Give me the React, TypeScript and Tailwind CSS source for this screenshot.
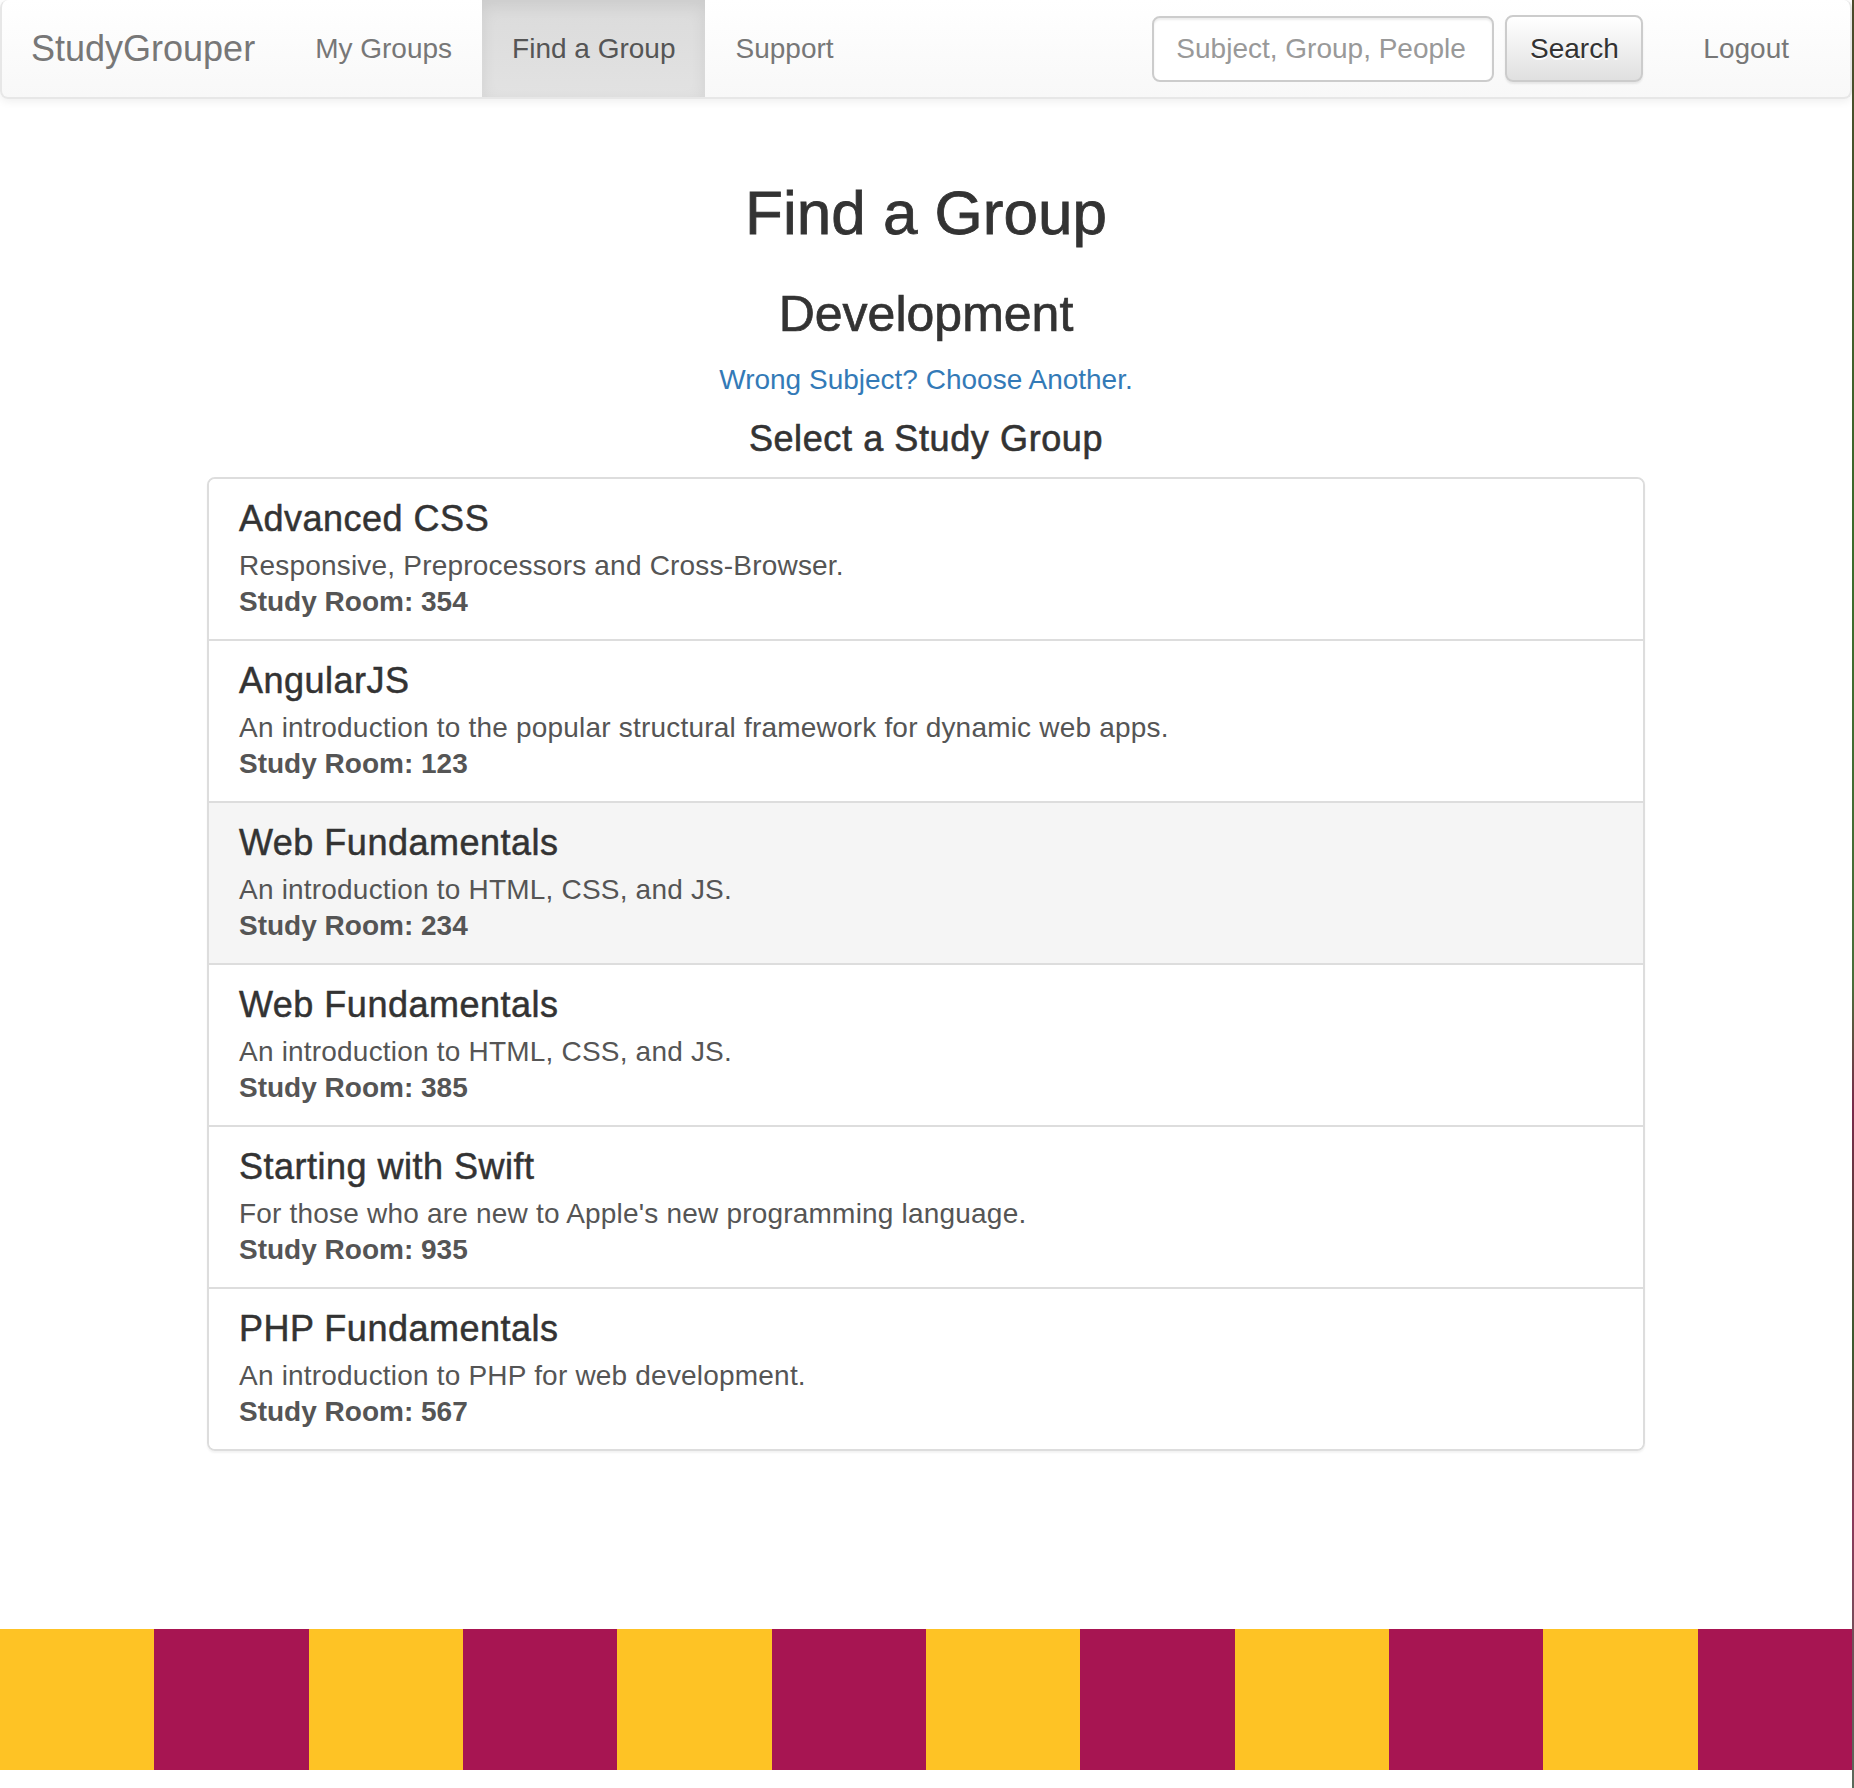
const groups = [
  {
    title: "Advanced CSS",
    desc: "Responsive, Preprocessors and Cross-Browser.",
    room: "354",
  },
  {
    title: "AngularJS",
    desc: "An introduction to the popular structural framework for dynamic web apps.",
    room: "123",
  },
  {
    title: "Web Fundamentals",
    desc: "An introduction to HTML, CSS, and JS.",
    room: "234",
    active: true,
  },
  {
    title: "Web Fundamentals",
    desc: "An introduction to HTML, CSS, and JS.",
    room: "385",
  },
  {
    title: "Starting with Swift",
    desc: "For those who are new to Apple's new programming language.",
    room: "935",
  },
  {
    title: "PHP Fundamentals",
    desc: "An introduction to PHP for web development.",
    room: "567",
  },
];

const stripes = [0, 1, 2, 3, 4, 5, 6, 7, 8, 9, 10, 11];

const Navbar = () => {
  return (
    <nav className="flex h-[99px] items-stretch rounded-[8px] border-2 border-t-0 border-[#e7e7e7] bg-[linear-gradient(to_bottom,#ffffff,#f8f8f8)] shadow-[0_2px_10px_rgba(0,0,0,0.075)]">
      <a className="flex items-center pl-[29px] pr-[30px] text-[36px] text-[#777]">
        StudyGrouper
      </a>
      <a className="flex items-center px-[30px] text-[28px] text-[#777]">
        My Groups
      </a>
      <a className="flex items-center bg-[linear-gradient(to_bottom,#dbdbdb,#e2e2e2)] px-[30px] text-[28px] text-[#555] shadow-[inset_0_6px_16px_rgba(0,0,0,0.075)]">
        Find a Group
      </a>
      <a className="flex items-center px-[30px] text-[28px] text-[#777]">
        Support
      </a>

      <div className="ml-auto flex items-center">
        <input
          className="h-[66px] w-[342px] rounded-[8px] border-2 border-[#ccc] bg-white px-[22px] text-[28px] text-[#555] shadow-[inset_0_2px_2px_rgba(0,0,0,0.075)] outline-none placeholder:text-[#999]"
          placeholder="Subject, Group, People"
        />
        <button className="ml-[11px] h-[67px] w-[138px] rounded-[8px] border-2 border-[#ccc] bg-[linear-gradient(to_bottom,#ffffff,#e0e0e0)] text-[28px] text-[#333] shadow-[0_2px_2px_rgba(0,0,0,0.075)] [text-shadow:0_2px_0_#fff]">
          Search
        </button>
        <a className="ml-[30px] mr-[31px] px-[30px] text-[28px] text-[#777]">
          Logout
        </a>
      </div>
    </nav>
  );
};

const GroupItem = ({ g }: { g: any }) => {
  return (
    <a
      className={
        "block border-b-2 border-[#ddd] px-[30px] pt-[20px] pb-[19px] last:border-b-0 " +
        (g.active ? "bg-[#f5f5f5]" : "bg-white")
      }
    >
      <h4 className="mb-[9px] text-[36px] leading-[40px] tracking-[0.5px] text-[#333] [-webkit-text-stroke:0.5px_#333]">
        {g.title}
      </h4>
      <p className="text-[28px] leading-[36px] tracking-[0.2px] text-[#555]">
        {g.desc}
      </p>
      <p className="text-[28px] font-bold leading-[36px] text-[#555]">
        Study Room: {g.room}
      </p>
    </a>
  );
};

export default function App() {
  return (
    <div className="flex w-full bg-white font-['Liberation_Sans',Arial,sans-serif]">
      <div className="flex min-w-0 flex-1 flex-col">
        <Navbar />

        <main className="flex flex-col items-center">
          <h1 className="mt-[80px] text-[62px] leading-[68px] text-[#333] [-webkit-text-stroke:0.8px_#333]">
            Find a Group
          </h1>
          <h2 className="mt-[40px] text-[50px] leading-[55px] text-[#333] [-webkit-text-stroke:0.7px_#333]">
            Development
          </h2>
          <a className="mt-[18px] text-[28px] leading-[40px] text-[#337ab7]">
            Wrong Subject? Choose Another.
          </a>
          <h3 className="mt-[19px] text-[36px] leading-[40px] tracking-[0.6px] text-[#333] [-webkit-text-stroke:0.6px_#333]">
            Select a Study Group
          </h3>

          <div className="mt-[18px] w-[1438px] overflow-hidden rounded-[8px] border-2 border-[#ddd] shadow-[0_2px_2px_rgba(0,0,0,0.05)]">
            {groups.map((g, i) => (
              <GroupItem key={i} g={g} />
            ))}
          </div>
        </main>

        <footer className="mt-[178px] grid h-[141px] grid-cols-12">
          {stripes.map((i) => (
            <div
              key={i}
              className={i % 2 === 0 ? "bg-[#fec325]" : "bg-[#a71552]"}
            ></div>
          ))}
        </footer>
        <div className="h-[18px]"></div>
      </div>
      <div className="w-[2px] shrink-0 bg-[linear-gradient(to_bottom,#4b4a2c,#3d6b2b_30%,#4a6e3a_55%,#7a2a4a_62%,#3d5a2e_75%,#8a3a5a_85%,#5a6a5a)]"></div>
    </div>
  );
}
